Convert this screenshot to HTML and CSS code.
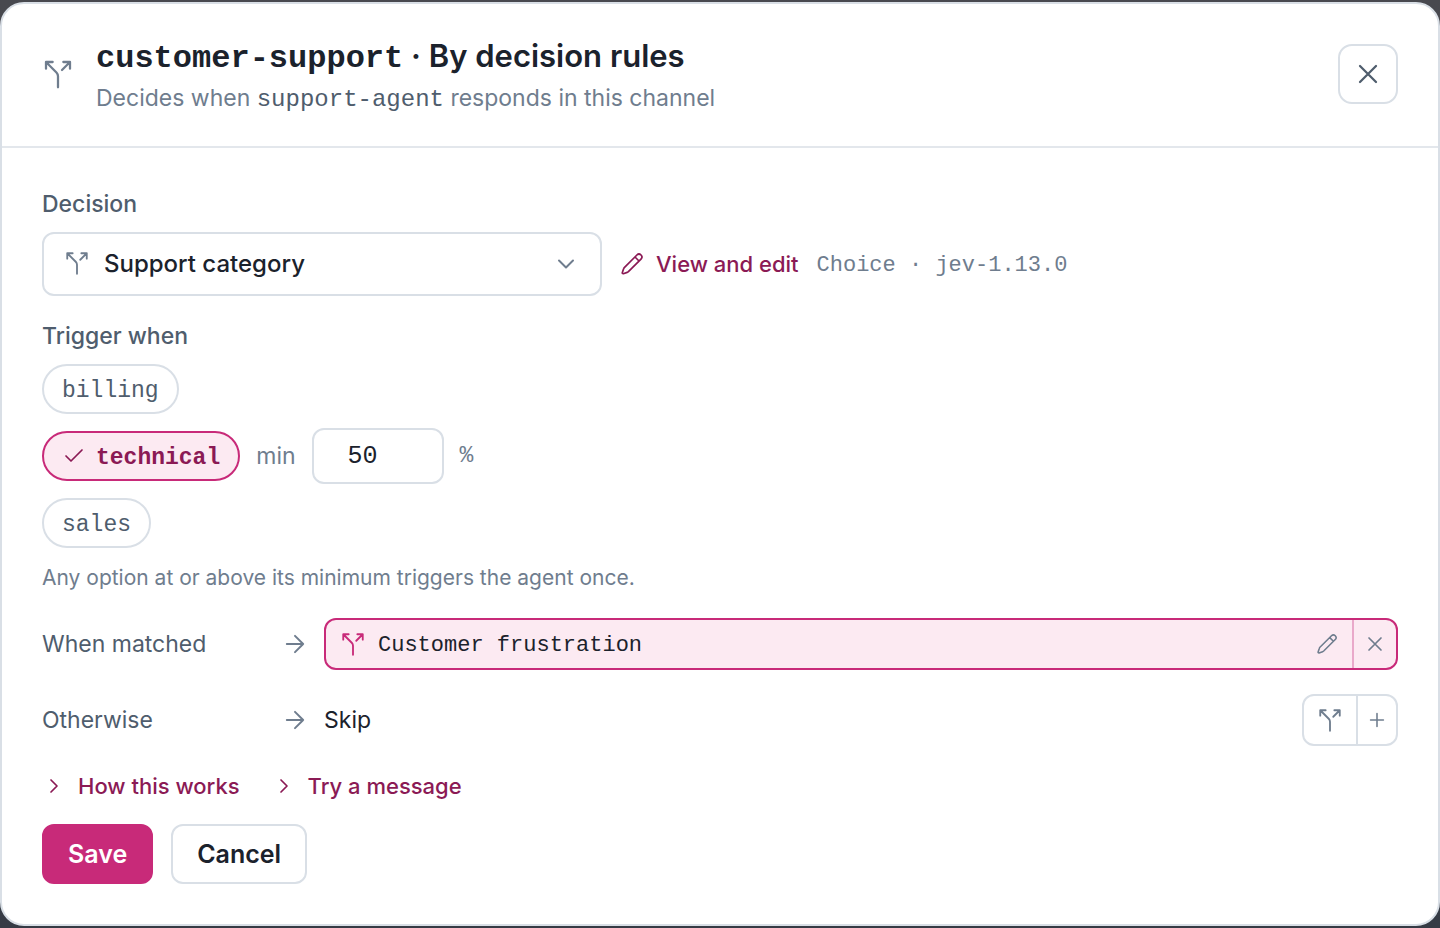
FILE: index.html
```html
<!DOCTYPE html>
<html lang="en">
<head>
<meta charset="utf-8">
<meta name="viewport" content="width=device-width, initial-scale=1">
<title>customer-support · By decision rules</title>
<link rel="stylesheet" href="styles.css">
</head>
<body>
<svg class="sprite" aria-hidden="true">
  <symbol id="i-split" viewBox="0 0 24 24"><path d="M16 3h5v5M8 3H3v5M12 22v-8.3a4 4 0 0 0-1.172-2.872L3 3M15 9l6-6"/></symbol>
  <symbol id="i-x" viewBox="0 0 24 24"><path d="M18 6 6 18M6 6l12 12"/></symbol>
  <symbol id="i-plus" viewBox="0 0 24 24"><path d="M5 12h14M12 5v14"/></symbol>
  <symbol id="i-check" viewBox="0 0 24 24"><path d="M20 6 9 17l-5-5"/></symbol>
  <symbol id="i-down" viewBox="0 0 24 24"><path d="m6 9 6 6 6-6"/></symbol>
  <symbol id="i-right" viewBox="0 0 24 24"><path d="m9 18 6-6-6-6"/></symbol>
  <symbol id="i-arrow" viewBox="0 0 24 24"><path d="M5 12h14M12 5l7 7-7 7"/></symbol>
  <symbol id="i-pencil" viewBox="0 0 24 24"><path d="M21 3a2.9 2.9 0 0 0-4.100 0L4.300 15.600a3 3 0 0 0-.7 1.200L2.300 20.700a.8.8 0 0 0 1 1l3.900-1.300a3 3 0 0 0 1.200-.7L21 7.100A2.900 2.900 0 0 0 21 3zM15 5l4 4"/></symbol>
</svg>
<main class="dialog" role="dialog" aria-labelledby="dialog-title">
  <header class="dialog-header">
    <svg class="icon icon-lg"><use href="#i-split"/></svg>
    <div class="heading">
      <h1 class="title" id="dialog-title"><span class="mono">customer-support</span> · By decision rules</h1>
      <p class="subtitle">Decides when <span class="mono agent">support-agent</span> responds in this channel</p>
    </div>
    <button class="close" type="button" aria-label="Close"><svg class="icon icon-lg"><use href="#i-x"/></svg></button>
  </header>
  <form class="dialog-body">
    <label class="label" for="decision">Decision</label>
    <div class="decision-row">
      <div class="select-wrap">
        <svg class="icon icon-split select-icon"><use href="#i-split"/></svg>
        <select class="select" id="decision"><option>Support category</option></select>
        <svg class="icon icon-md select-chevron"><use href="#i-down"/></svg>
      </div>
      <a class="edit-link" href="#"><svg class="icon icon-sm"><use href="#i-pencil"/></svg>View and edit</a>
      <span class="mono meta">Choice · jev-1.13.0</span>
    </div>

    <fieldset class="options">
      <legend class="label">Trigger when</legend>
      <div class="option"><button class="chip" type="button" aria-pressed="false"><span class="mono chip-text">billing</span></button></div>
      <div class="option">
        <button class="chip chip-on" type="button" aria-pressed="true"><svg class="icon icon-sm"><use href="#i-check"/></svg><span class="mono chip-text">technical</span></button>
        <label class="unit" for="minimum">min</label>
        <input class="number" id="minimum" type="number" value="50" min="0" max="100">
        <span class="mono unit">%</span>
      </div>
      <div class="option"><button class="chip" type="button" aria-pressed="false"><span class="mono chip-text">sales</span></button></div>
    </fieldset>
    <p class="help">Any option at or above its minimum triggers the agent once.</p>

    <div class="route">
      <span class="route-label">When matched</span>
      <svg class="icon icon-md"><use href="#i-arrow"/></svg>
      <div class="step">
        <svg class="icon icon-split step-icon"><use href="#i-split"/></svg>
        <span class="mono step-name">Customer frustration</span>
        <button class="step-edit" type="button" aria-label="Edit step"><svg class="icon icon-xs"><use href="#i-pencil"/></svg></button>
        <button class="step-remove" type="button" aria-label="Remove step"><svg class="icon icon-sm"><use href="#i-x"/></svg></button>
      </div>
    </div>
    <div class="route">
      <span class="route-label">Otherwise</span>
      <svg class="icon icon-md"><use href="#i-arrow"/></svg>
      <span class="route-value">Skip</span>
      <div class="add">
        <button class="add-split" type="button" aria-label="Add decision"><svg class="icon icon-split"><use href="#i-split"/></svg></button>
        <button class="add-plus" type="button" aria-label="Add step"><svg class="icon icon-xs"><use href="#i-plus"/></svg></button>
      </div>
    </div>

    <div class="toggles">
      <button class="toggle" type="button" aria-expanded="false"><svg class="icon icon-sm"><use href="#i-right"/></svg>How this works</button>
      <button class="toggle" type="button" aria-expanded="false"><svg class="icon icon-sm"><use href="#i-right"/></svg>Try a message</button>
    </div>
    <div class="actions">
      <button class="button button-primary" type="submit">Save</button>
      <button class="button" type="button">Cancel</button>
    </div>
  </form>
</main>
</body>
</html>
```

FILE: styles.css
```css
:root {
  --ink: #1b222c;
  --label: #4f5d6d;
  --muted: #6f7d8e;
  --line: #d9dfe6;
  --pink: #c82a79;
  --pink-dark: #8b1a55;
  --pink-soft: #fceaf2;
}
* { box-sizing: border-box; }
body {
  margin: 0;
  padding: 2px 0;
  min-height: 100vh;
  background: linear-gradient(#48494f, #363b45);
  color: var(--ink);
  font: 400 23px/32px Inter, "Liberation Sans", sans-serif;
}
h1, p { margin: 0; }
button, input, select { font: inherit; color: inherit; }
button { cursor: pointer; }
.mono { font-family: "Liberation Mono", monospace; line-height: 1; }
.sprite { display: none; }
.icon {
  flex: none;
  display: block;
  width: 24px;
  height: 24px;
  fill: none;
  stroke: currentColor;
  stroke-width: 1.7;
  stroke-linecap: round;
  stroke-linejoin: round;
}
.icon-xs { width: 22px; height: 22px; }
.icon-split { width: 26px; height: 26px; }
.icon-md { width: 28px; height: 28px; }
.icon-lg { width: 32px; height: 32px; }

.dialog {
  border: 2px solid var(--line);
  border-radius: 24px;
  background: #fff;
}
.dialog-header {
  display: flex;
  align-items: center;
  gap: 22px;
  padding: 30px 40px 32px;
  border-bottom: 2px solid #e3e7ec;
  color: var(--muted);
}
.heading { flex: 1; }
.title {
  margin-bottom: 4px;
  color: var(--ink);
  font-size: 31px;
  font-weight: 600;
  line-height: 44px;
}
.title .mono { font-size: 32px; font-weight: 700; }
.agent { color: var(--label); font-size: 24px; }
.close {
  display: grid;
  place-items: center;
  width: 60px;
  height: 60px;
  padding: 0;
  border: 2px solid var(--line);
  border-radius: 14px;
  background: #fff;
  color: var(--label);
}

.dialog-body { padding: 40px; }
.label {
  display: block;
  margin-bottom: 12px;
  padding: 0;
  color: var(--label);
  font-weight: 500;
}
.decision-row {
  display: flex;
  align-items: center;
  gap: 18px;
  margin-bottom: 24px;
}
.select-wrap { position: relative; width: 560px; }
.select {
  display: block;
  width: 100%;
  height: 64px;
  padding: 0 60px;
  border: 2px solid var(--line);
  border-radius: 12px;
  background: #fff;
  appearance: none;
  font-size: 24px;
  font-weight: 500;
}
.select-icon, .select-chevron {
  position: absolute;
  top: 18px;
  color: var(--muted);
  pointer-events: none;
}
.select-icon { left: 22px; }
.select-chevron { right: 22px; }
.edit-link {
  display: flex;
  align-items: center;
  gap: 12px;
  color: var(--pink-dark);
  font-size: 22px;
  font-weight: 500;
  text-decoration: none;
}
.meta, .chip-text, .step-name { padding-top: 4px; }
.meta { color: var(--muted); font-size: 22px; }

.options {
  display: grid;
  gap: 14px;
  min-width: 0;
  margin: 0 0 14px;
  padding: 0;
  border: 0;
}
.option { display: flex; align-items: center; gap: 16px; }
.chip {
  display: flex;
  align-items: center;
  gap: 10px;
  height: 50px;
  padding: 0 18px;
  border: 2px solid var(--line);
  border-radius: 25px;
  background: #fff;
  color: var(--label);
}
.chip-on {
  border-color: var(--pink);
  background: var(--pink-soft);
  color: var(--pink-dark);
  font-weight: 700;
}
.unit { color: var(--muted); }
.number {
  width: 132px;
  height: 56px;
  padding: 0 34px;
  border: 2px solid var(--line);
  border-radius: 12px;
  background: #fff;
  appearance: textfield;
  font-family: "Liberation Mono", monospace;
  font-size: 25px;
}
.number::-webkit-inner-spin-button { display: none; }
.help {
  margin-bottom: 24px;
  color: var(--muted);
  font-size: 21px;
}

.route {
  display: flex;
  align-items: center;
  gap: 15px;
  min-height: 52px;
  margin-bottom: 24px;
  color: var(--muted);
}
.route-label { flex: none; width: 224px; color: var(--label); }
.route-value { flex: 1; color: var(--ink); }
.step {
  display: flex;
  flex: 1;
  align-items: center;
  height: 52px;
  overflow: hidden;
  border: 2px solid var(--pink);
  border-radius: 12px;
  background: var(--pink-soft);
}
.step-icon { margin: 0 12px 0 14px; color: var(--pink); }
.step-name { flex: 1; color: var(--ink); font-size: 22px; }
.step button, .add button {
  display: grid;
  place-items: center;
  height: 48px;
  padding: 0;
  border: 0;
  background: none;
  color: var(--muted);
}
.step .step-edit { width: 50px; }
.step .step-remove { width: 44px; border-left: 2px solid #e9a9ca; }
.add {
  display: flex;
  border: 2px solid var(--line);
  border-radius: 12px;
  background: #fff;
}
.add .add-split { width: 52px; }
.add .add-plus { width: 40px; border-left: 2px solid var(--line); }

.toggles { display: flex; gap: 32px; margin-bottom: 22px; }
.toggle {
  display: flex;
  align-items: center;
  gap: 12px;
  padding: 0;
  border: 0;
  background: none;
  color: var(--pink-dark);
  font-size: 22px;
  font-weight: 500;
}
.actions { display: flex; gap: 18px; }
.button {
  height: 60px;
  padding: 0 24px;
  border: 2px solid var(--line);
  border-radius: 12px;
  background: #fff;
  font-size: 25px;
  font-weight: 600;
}
.button-primary {
  border-color: var(--pink);
  background: var(--pink);
  color: #fff;
}
```
